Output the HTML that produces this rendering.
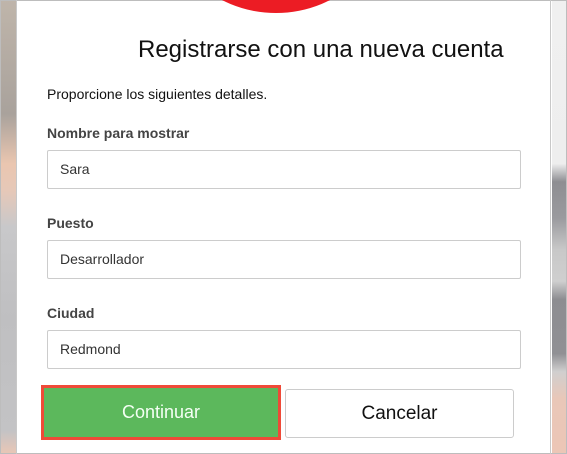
<!DOCTYPE html>
<html><head><style>
html,body{margin:0;padding:0;}
body{width:567px;height:454px;position:relative;overflow:hidden;background:#fff;font-family:"Liberation Sans",Arial,sans-serif;}
.frame{position:absolute;left:0;top:0;width:565px;height:452px;border:1px solid #bdbdbd;}
.ls{position:absolute;left:1px;top:1px;width:15px;height:452px;background:linear-gradient(#bfb5aa 0%,#a9a29c 25%,#eac6b0 36%,#e6c8b8 42%,#c8c8ca 50%,#bfbfc1 70%,#c3c3c5 95%,#e8c6b6 100%);}
.ld{position:absolute;left:16px;top:0;width:1px;height:454px;background:#c8c8c8;}
.rs{position:absolute;left:552px;top:1px;width:14px;height:452px;background:linear-gradient(#f0f0f0 0%,#eeeeee 36%,#8e8e92 40%,#9a9a9e 48%,#c8c8c8 55%,#cfcfcf 62%,#8d8d91 66%,#909094 78%,#d0cfcf 82%,#e9c7b8 88%,#ecc6b6 100%);}
.rd{position:absolute;left:550px;top:0;width:1px;height:454px;background:#c8c8c8;}
.circle{position:absolute;left:157px;top:-225px;width:238px;height:238px;border-radius:50%;background:#ec1c24;}
.title{position:absolute;left:138px;top:36px;font-size:24px;color:#111;white-space:nowrap;}
.sub{position:absolute;left:47px;top:86px;font-size:14px;color:#111;}
.lbl{position:absolute;left:47px;font-size:14px;font-weight:bold;color:#444;}
.inp{position:absolute;left:47px;border:1px solid #ccc;border-radius:2px;box-sizing:border-box;width:474px;height:39px;font-size:14px;color:#333;line-height:37px;padding-left:12px;}
.cont{position:absolute;left:41px;top:385px;width:240px;height:55px;background:#ef4a38;}
.cont div{position:absolute;left:3px;top:3px;width:234px;height:49px;background:#5cb85c;color:#f4fff4;font-size:18px;text-align:center;line-height:49px;}
.canc{position:absolute;left:285px;top:389px;width:229px;height:49px;border:1px solid #ccc;border-radius:3px;box-sizing:border-box;font-size:19px;color:#111;text-align:center;line-height:47px;}
</style></head><body>
<div class="frame"></div>
<div class="ls"></div><div class="ld"></div>
<div class="rs"></div><div class="rd"></div>
<div class="circle"></div>
<div class="title">Registrarse con una nueva cuenta</div>
<div class="sub">Proporcione los siguientes detalles.</div>
<div class="lbl" style="top:125px">Nombre para mostrar</div>
<div class="inp" style="top:150px">Sara</div>
<div class="lbl" style="top:215px">Puesto</div>
<div class="inp" style="top:240px">Desarrollador</div>
<div class="lbl" style="top:305px">Ciudad</div>
<div class="inp" style="top:330px">Redmond</div>
<div class="cont"><div>Continuar</div></div>
<div class="canc">Cancelar</div>
</body></html>
